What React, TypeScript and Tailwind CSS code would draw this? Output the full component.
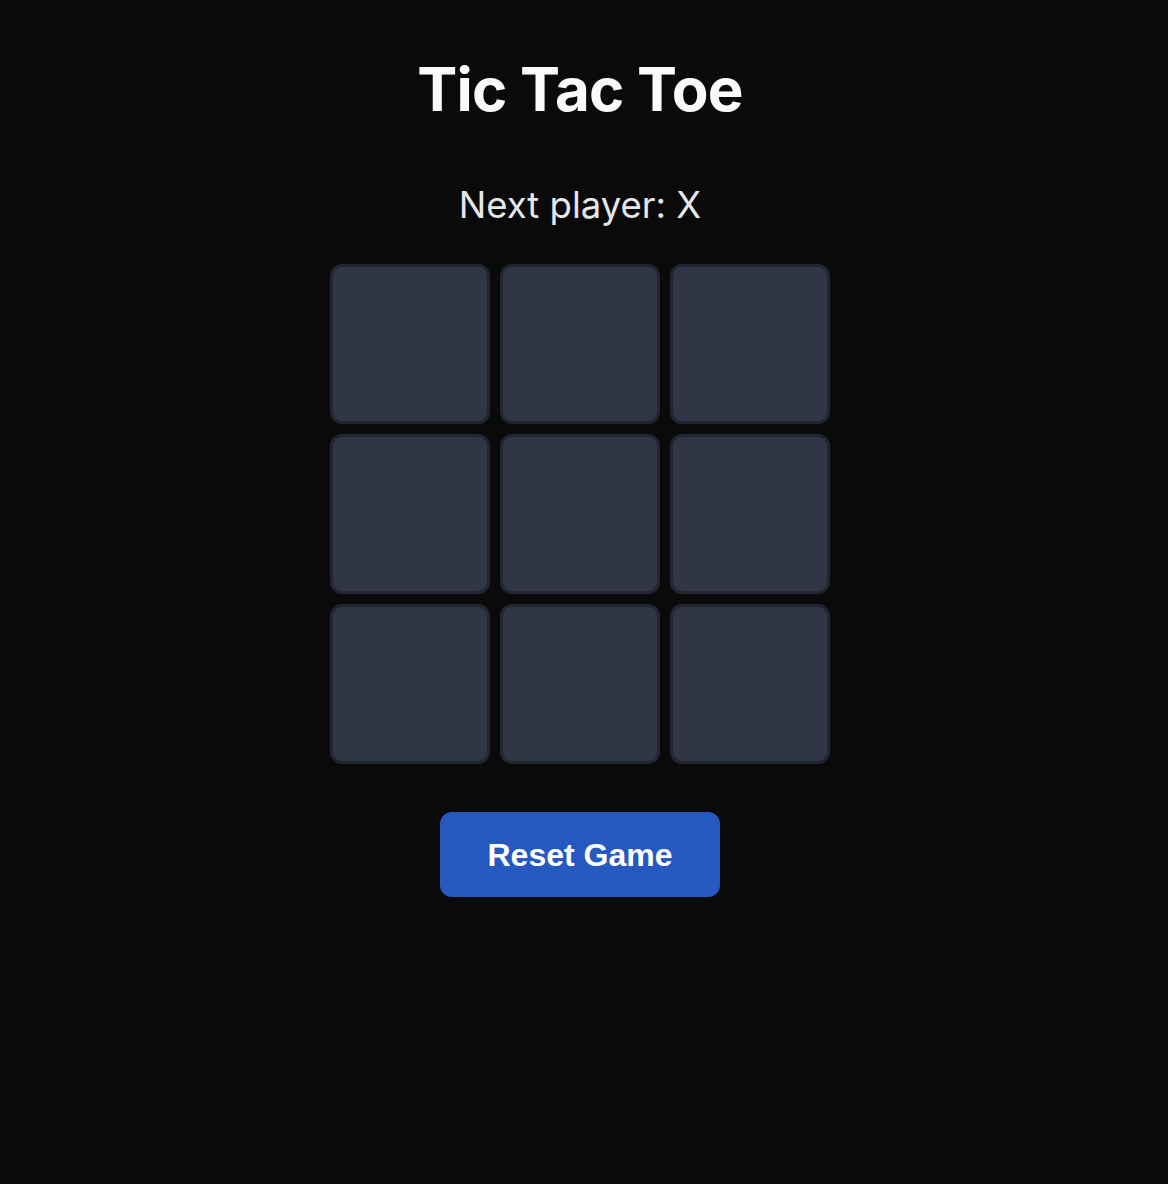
import { useState } from 'react'

type Cell = 'X' | 'O' | null

const lines = [
  [0, 1, 2], [3, 4, 5], [6, 7, 8],
  [0, 3, 6], [1, 4, 7], [2, 5, 8],
  [0, 4, 8], [2, 4, 6],
]

function getWinner(board: Cell[]) {
  for (const [a, b, c] of lines) {
    if (board[a] && board[a] === board[b] && board[a] === board[c]) return board[a]
  }
  return null
}

export default function App() {
  const [board, setBoard] = useState<Cell[]>(Array(9).fill(null))
  const [xNext, setXNext] = useState(true)

  const winner = getWinner(board)
  const isDraw = !winner && board.every(Boolean)
  const status = winner ? `Winner: ${winner}` : isDraw ? 'Draw!' : `Next player: ${xNext ? 'X' : 'O'}`

  const handleClick = (i: number) => {
    if (board[i] || winner) return
    const next = board.slice()
    next[i] = xNext ? 'X' : 'O'
    setBoard(next)
    setXNext(!xNext)
  }

  const reset = () => {
    setBoard(Array(9).fill(null))
    setXNext(true)
  }

  return (
    <div className="min-h-screen bg-[#0a0a0a] flex flex-col items-center pt-[54px] pr-[8px] font-['Inter',sans-serif]">
      <h1 className="text-[60px] leading-[70px] font-bold tracking-[-0.75px] text-[#f9fafb]">Tic Tac Toe</h1>
      <p className="mt-[61px] text-[36.5px] leading-[40px] text-[#e5e7eb]">{status}</p>
      <div className="mt-[39px] grid grid-cols-3 gap-[10px]">
        {board.map((cell, i) => (
          <button
            key={i}
            onClick={() => handleClick(i)}
            className="w-[160px] h-[160px] rounded-xl border-[3px] border-[#222632] bg-[#303646] text-6xl font-bold text-white"
          >
            {cell}
          </button>
        ))}
      </div>
      <button
        onClick={reset}
        className="mt-[48px] w-[280px] h-[85px] rounded-xl bg-[#2559bf] text-white text-[32px] font-bold font-['Liberation_Sans',Arial,sans-serif]"
      >
        Reset Game
      </button>
    </div>
  )
}
